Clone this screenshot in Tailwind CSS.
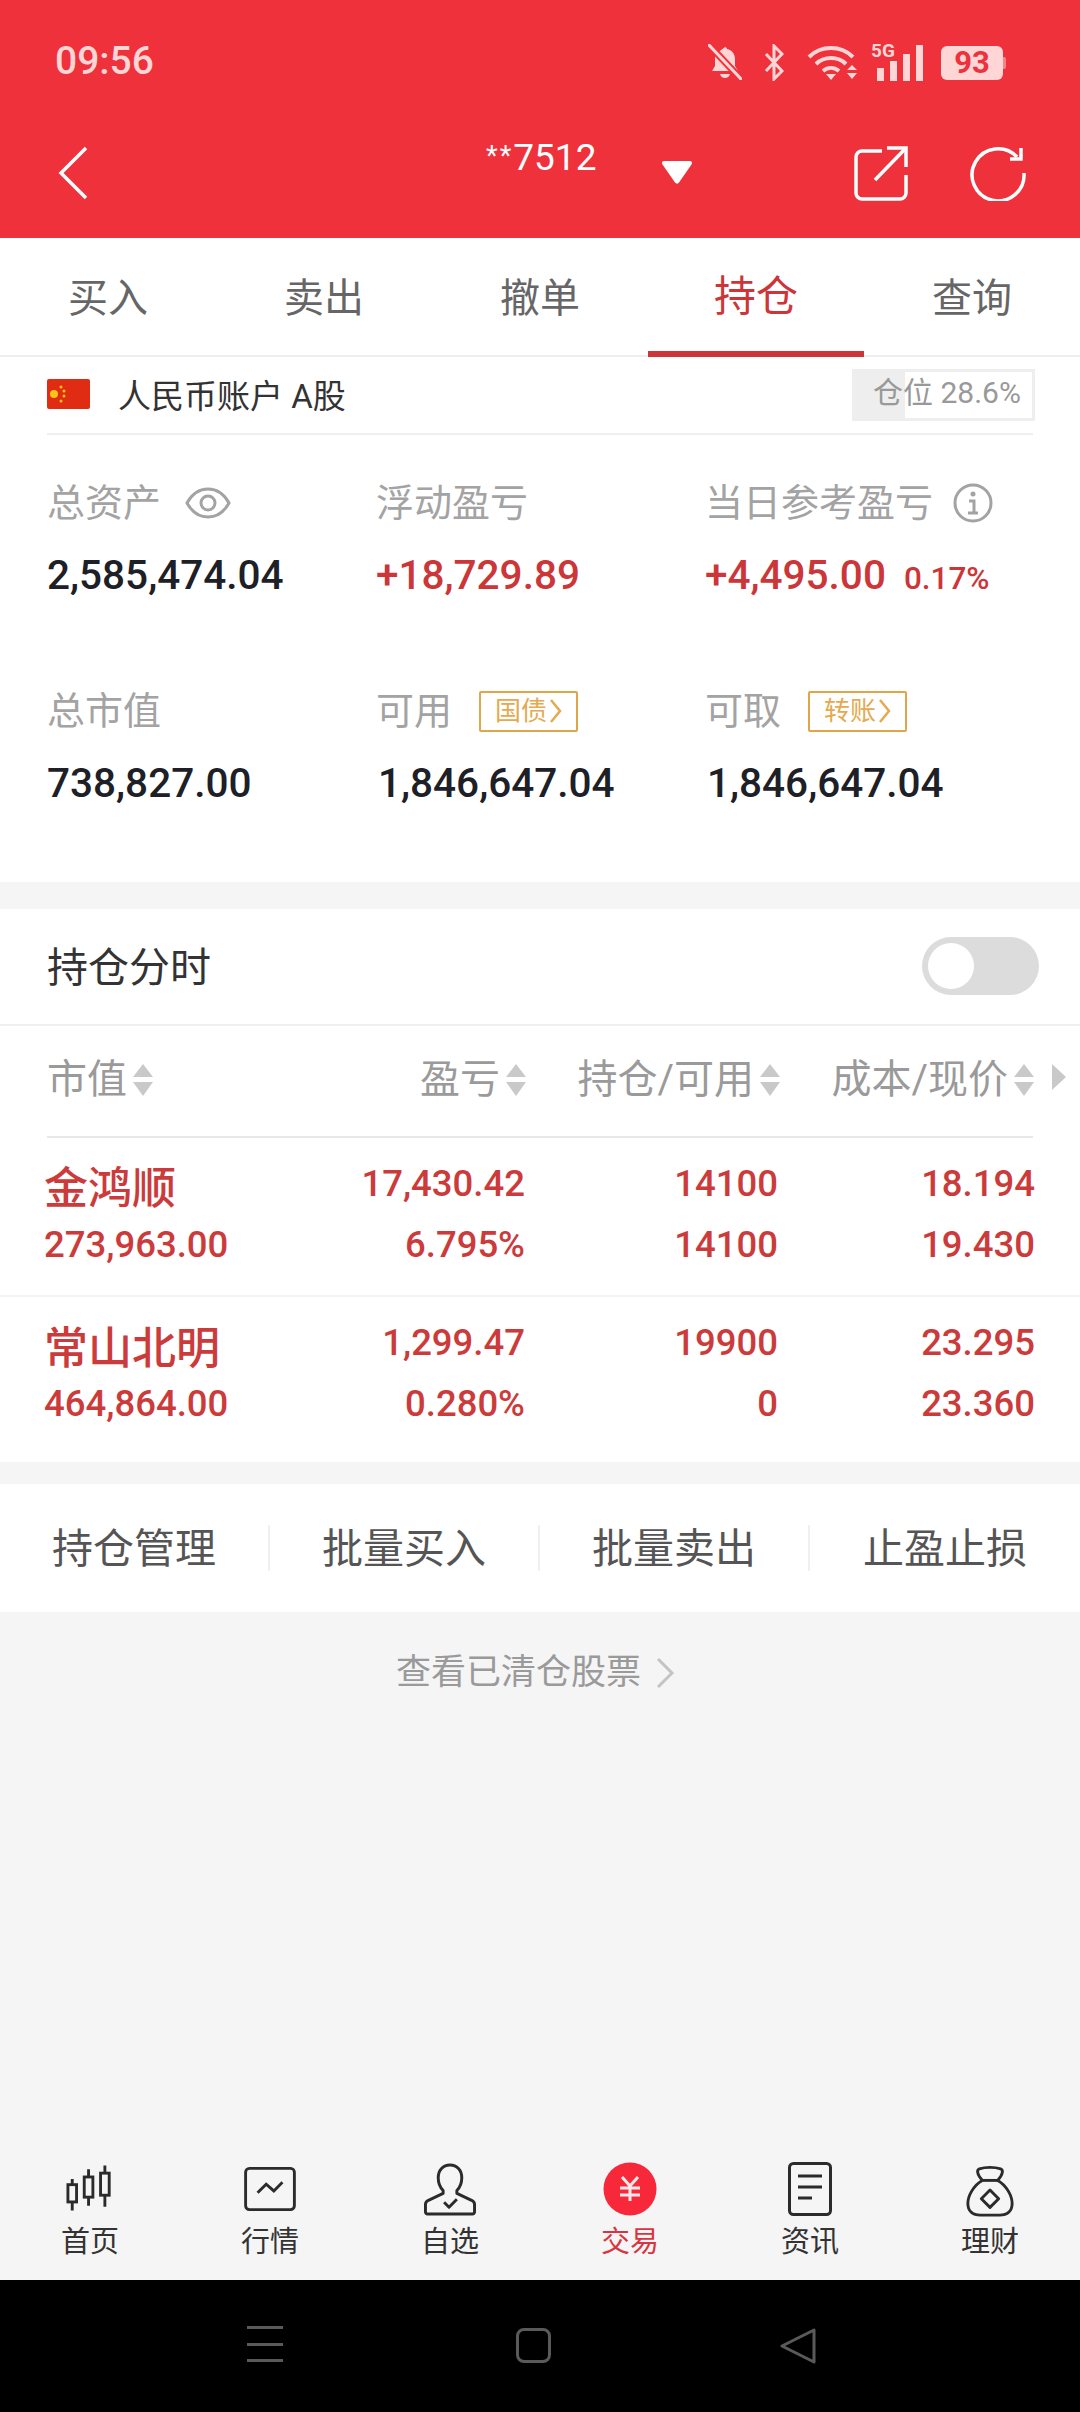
<!DOCTYPE html>
<html lang="zh-CN">
<head>
    <meta charset="UTF-8">
    <meta name="viewport" content="width=device-width, initial-scale=1.0">
    <title>持仓</title>
    <script src="https://cdn.jsdelivr.net/npm/@tailwindcss/browser@4"></script>
</head>
<body class="bg-[#f5f5f5] [font-family:Roboto,'Noto_Sans_CJK_SC',sans-serif]">
<div class="w-[1080px] h-[2412px] flex flex-col overflow-hidden">

    <!-- header -->
    <header class="h-[238px] bg-[#ef313b] shrink-0">
        <div class="h-[124px] pl-[55px] flex items-center relative">
            <span class="text-[39px] font-medium leading-none text-[#ffd6d6] -mt-[2px]">09:56</span>
            <div class="ml-auto mr-[74px] flex items-start text-[#ffd6d6]">
                <!-- bell off -->
                <svg class="w-[34px] h-[36px] mr-[22px]" viewBox="0 0 34 36" fill="currentColor">
                    <path d="M17 3c1 0 2 1 2 2 5 1 8 5 8 10v7l3 5H4l3-5v-7c0-2 .5-3.500 1-5z"/>
                    <path d="M12 30h10c-1 3-3 4-5 4s-4-1-5-4z"/>
                    <path d="M1 1l32 34" stroke="#ef313b" stroke-width="7"/>
                    <path d="M1 1l32 34" stroke="currentColor" stroke-width="3" stroke-linecap="round"/>
                </svg>
                <!-- bluetooth -->
                <svg class="w-[20px] h-[37px] mr-[23px]" viewBox="0 0 20 37" fill="none" stroke="currentColor" stroke-width="3">
                    <path d="M2 10l16 17-8 8V2l8 8L2 27"/>
                </svg>
                <!-- wifi -->
                <svg class="w-[50px] h-[37px] mr-[14px]" viewBox="0 0 50 37" fill="none" stroke="currentColor" stroke-width="4">
                    <path d="M2 13c12-12 32-12 44 0"/>
                    <path d="M9 20c8-8 22-8 30 0"/>
                    <path d="M16 27c5-4 11-4 16 0"/>
                    <path d="M19 30h10l-5 6z" fill="currentColor" stroke="none"/>
                    <path d="M45 21l5 5H40zM40 29h10l-5 6z" fill="currentColor" stroke="none"/>
                </svg>
                <!-- 5G signal -->
                <div class="relative w-[52px] h-[37px] mr-[18px]">
                    <span class="absolute left-0 -top-[2px] text-[19px] font-bold leading-[17px]">5G</span>
                    <div class="absolute left-[6px] bottom-0 flex items-end gap-[6px]">
                        <i class="block w-[7px] h-[13px] bg-[#ffd6d6]"></i>
                        <i class="block w-[7px] h-[20px] bg-[#ffd6d6]"></i>
                        <i class="block w-[7px] h-[27px] bg-[#ffd6d6]"></i>
                        <i class="block w-[7px] h-[36px] bg-[#ffd6d6]"></i>
                    </div>
                </div>
                <!-- battery -->
                <div class="mt-[2px] flex items-center">
                    <span class="w-[62px] h-[34px] rounded-[6px] bg-[#ffd6d6] text-[#ef313b] text-[31px] font-bold leading-[34px] text-center">93</span>
                    <i class="block w-[3px] h-[12px] bg-[#ffd6d6]/50 rounded-r-[2px]"></i>
                </div>
            </div>
        </div>
        <div class="h-[114px] flex items-start relative">
            <svg class="w-[32px] h-[54px] ml-[57px] mt-[22px]" viewBox="0 0 32 54" fill="none" stroke="#fff" stroke-width="3.500">
                <path d="M29 2L4 27l25 25" stroke-linejoin="miter"/>
            </svg>
            <div class="absolute left-[486px] top-[15px] text-[#fff] text-[37px] leading-[38px] flex items-center">
                <span class="text-[27px] tracking-[2px] relative -top-[2px]">**</span>7512
            </div>
            <svg class="absolute left-[662px] top-[37px] w-[30px] h-[23px]" viewBox="0 0 30 23" fill="#fff">
                <path d="M2 0h26c2 0 2.500 2 1.500 3.500L17 21.500c-1 1.500-3 1.500-4 0L.5 3.500C-.5 2 0 0 2 0z"/>
            </svg>
            <svg class="w-[56px] h-[56px] ml-[764px] mt-[21px]" viewBox="0 0 56 56" fill="none" stroke="#fff" stroke-width="3.500">
                <path d="M29 6H9a6 6 0 0 0-6 6v36a6 6 0 0 0 6 6h38a6 6 0 0 0 6-6V30"/>
                <path d="M22 35L52 4"/>
                <path d="M34 3h19v19"/>
            </svg>
            <svg class="w-[56px] h-[56px] ml-[61px] mt-[21px]" viewBox="0 0 56 56" fill="none" stroke="#fff" stroke-width="3.500">
                <path d="M47 12A26 26 0 1 0 54 28"/>
                <path d="M51 3v11H40" stroke-linejoin="miter"/>
            </svg>
        </div>
    </header>

    <!-- white top part -->
    <section class="bg-white h-[644px] shrink-0">
        <nav class="h-[119px] grid grid-cols-5 border-b-2 border-[#eeeeee] text-[40px] text-[#666]">
            <div class="flex items-center justify-center h-[117px] pt-[5px]">买入</div>
            <div class="flex items-center justify-center h-[117px] pt-[5px]">卖出</div>
            <div class="flex items-center justify-center h-[117px] pt-[5px]">撤单</div>
            <div class="flex items-center justify-center h-[119px] pt-[4px] border-b-[6px] border-[#cc3638] text-[#cc3638] text-[42px]">持仓</div>
            <div class="flex items-center justify-center h-[117px] pt-[5px]">查询</div>
        </nav>
        <div class="mx-[47px] h-[78px] border-b-2 border-[#efefef] flex items-center">
            <svg class="w-[43px] h-[30px] rounded-[2px] -mt-[2px]" viewBox="0 0 43 30">
                <rect width="43" height="30" fill="#e02c12"/>
                <circle cx="7" cy="15" r="4" fill="#f5c518"/>
                <circle cx="14" cy="8" r="1.500" fill="#f5c518"/>
                <circle cx="17" cy="12" r="1.500" fill="#f5c518"/>
                <circle cx="17" cy="17" r="1.500" fill="#f5c518"/>
                <circle cx="14" cy="22" r="1.500" fill="#f5c518"/>
            </svg>
            <span class="ml-[28px] text-[33px] leading-none text-[#333] mt-[2px]">人民币账户 A股</span>
            <div class="ml-auto -mr-[2px] -mt-[1px] relative w-[183px] h-[52px] border-[3px] border-[#eeeeee] bg-white">
                <div class="absolute left-0 top-0 h-full w-[50px] bg-[#eeeeee]"></div>
                <span class="absolute left-[18px] top-0 whitespace-nowrap text-[30px] leading-[42px] text-[#999]">仓位 28.6%</span>
            </div>
        </div>
        <div class="pt-[43px] pl-[47px] grid grid-cols-[329px_329px_1fr] grid-rows-[50px_50px] gap-y-[22px]">
            <div class="flex items-center text-[38px] text-[#a3a3a3] leading-[50px]">
                总资产
                <svg class="w-[46px] h-[32px] ml-[24px]" viewBox="0 0 46 32" fill="none" stroke="#a3a3a3" stroke-width="3">
                    <path d="M2 16C7 7 14 2 23 2s16 5 21 14c-5 9-12 14-21 14S7 25 2 16z"/>
                    <circle cx="23" cy="16" r="7"/>
                </svg>
            </div>
            <div class="text-[38px] text-[#a3a3a3] leading-[50px]">浮动盈亏</div>
            <div class="flex items-center text-[38px] text-[#a3a3a3] leading-[50px]">
                当日参考盈亏
                <svg class="w-[40px] h-[40px] ml-[20px]" viewBox="0 0 40 40" fill="none" stroke="#a3a3a3" stroke-width="3">
                    <circle cx="20" cy="20" r="18"/>
                    <path d="M16 18h5v12M15 30h10" stroke-width="3"/>
                    <circle cx="20" cy="11" r="2.500" fill="#a3a3a3" stroke="none"/>
                </svg>
            </div>
            <div class="text-[40.5px] font-medium leading-[50px] text-[#1d2026]">2,585,474.04</div>
            <div class="text-[40.5px] font-medium leading-[50px] text-[#cc3638]">+18,729.89</div>
            <div class="flex items-baseline text-[40.5px] font-medium leading-[50px] text-[#cc3638]">+4,495.00<span class="ml-[18px] text-[31.5px]">0.17%</span></div>
        </div>
        <div class="mt-[86px] pl-[47px] grid grid-cols-[329px_329px_1fr] grid-rows-[50px_50px] gap-y-[22px]">
            <div class="text-[38px] text-[#a3a3a3] leading-[50px]">总市值</div>
            <div class="flex items-center text-[38px] text-[#a3a3a3] leading-[50px]">
                可用
                <span class="ml-[27px] w-[99px] h-[41px] border-2 border-[#e0a64a] rounded-[2px] flex items-center justify-center text-[26px] leading-none text-[#e5a94f]">国债<svg class="w-[13px] h-[26px] ml-[2px]" viewBox="0 0 13 26" fill="none" stroke="#e5a94f" stroke-width="2.500"><path d="M2 2l9 11-9 11"/></svg></span>
            </div>
            <div class="flex items-center text-[38px] text-[#a3a3a3] leading-[50px]">
                可取
                <span class="ml-[27px] w-[99px] h-[41px] border-2 border-[#e0a64a] rounded-[2px] flex items-center justify-center text-[26px] leading-none text-[#e5a94f]">转账<svg class="w-[13px] h-[26px] ml-[2px]" viewBox="0 0 13 26" fill="none" stroke="#e5a94f" stroke-width="2.500"><path d="M2 2l9 11-9 11"/></svg></span>
            </div>
            <div class="text-[40.5px] font-medium leading-[50px] text-[#1d2026]">738,827.00</div>
            <div class="text-[40.5px] font-medium leading-[50px] text-[#1d2026] pl-[2px]">1,846,647.04</div>
            <div class="text-[40.5px] font-medium leading-[50px] text-[#1d2026] pl-[2px]">1,846,647.04</div>
        </div>
    </section>

    <!-- positions -->
    <section class="bg-white mt-[27px] h-[553px] shrink-0">
        <div class="h-[117px] border-b-2 border-[#efefef] flex items-center pl-[47px] pr-[41px] text-[41px] text-[#333]">
            <span class="pt-[4px]">持仓分时</span>
            <div class="ml-auto -mt-[2px] w-[117px] h-[58px] rounded-full bg-[#dcdcdc] p-[6px]">
                <div class="w-[46px] h-[46px] rounded-full bg-white"></div>
            </div>
        </div>
        <div class="h-[110px] relative grid grid-cols-[240px_239px_254px_254px] pl-[47px] items-center text-[40px] text-[#9a9a9a]">
            <div class="flex items-center -mt-[2px]">市值
                <svg class="w-[20px] h-[32px] ml-[6px]" viewBox="0 0 20 32" fill="#c9c9c9"><path d="M10 0l10 13H0zM0 18h20L10 32z"/></svg>
            </div>
            <div class="flex items-center justify-end -mt-[2px]">盈亏
                <svg class="w-[20px] h-[32px] ml-[6px]" viewBox="0 0 20 32" fill="#c9c9c9"><path d="M10 0l10 13H0zM0 18h20L10 32z"/></svg>
            </div>
            <div class="flex items-center justify-end -mt-[2px]">持仓/可用
                <svg class="w-[20px] h-[32px] ml-[6px]" viewBox="0 0 20 32" fill="#c9c9c9"><path d="M10 0l10 13H0zM0 18h20L10 32z"/></svg>
            </div>
            <div class="flex items-center justify-end -mt-[2px]">成本/现价
                <svg class="w-[20px] h-[32px] ml-[6px]" viewBox="0 0 20 32" fill="#c9c9c9"><path d="M10 0l10 13H0zM0 18h20L10 32z"/></svg>
            </div>
            <svg class="absolute left-[1052px] top-[38px] w-[14px] h-[26px]" viewBox="0 0 14 26" fill="#c9c9c9"><path d="M0 0l14 13L0 26z"/></svg>
        </div>
        <div class="mx-[47px] h-[2px] bg-[#e8e8e8]"></div>

        <div class="h-[159px] pt-[15px] pl-[44px] border-b-2 border-[#f3f3f3] grid grid-cols-[240px_241px_253px_257px] text-[36.5px] font-medium text-[#cc3b3b] text-right leading-[61px]">
            <div class="text-left whitespace-nowrap"><div class="h-[61px] text-[44px] font-medium leading-[73px]">金鸿顺</div><div>273,963.00</div></div>
            <div><div>17,430.42</div><div>6.795%</div></div>
            <div><div>14100</div><div>14100</div></div>
            <div><div>18.194</div><div>19.430</div></div>
        </div>
        <div class="h-[163px] pt-[15px] pl-[44px] grid grid-cols-[240px_241px_253px_257px] text-[36.5px] font-medium text-[#cc3b3b] text-right leading-[61px]">
            <div class="text-left whitespace-nowrap"><div class="h-[61px] text-[44px] font-medium leading-[74px]">常山北明</div><div>464,864.00</div></div>
            <div><div>1,299.47</div><div>0.280%</div></div>
            <div><div>19900</div><div>0</div></div>
            <div><div>23.295</div><div>23.360</div></div>
        </div>
    </section>

    <!-- actions -->
    <div class="bg-white mt-[22px] h-[128px] shrink-0 grid grid-cols-4 items-center text-[41px] text-[#555]">
        <div class="h-[46px] pt-[3px] flex items-center justify-center border-r-2 border-[#f0f0f0]">持仓管理</div>
        <div class="h-[46px] pt-[3px] flex items-center justify-center border-r-2 border-[#f0f0f0]">批量买入</div>
        <div class="h-[46px] pt-[3px] flex items-center justify-center border-r-2 border-[#f0f0f0]">批量卖出</div>
        <div class="h-[46px] pt-[3px] flex items-center justify-center">止盈止损</div>
    </div>

    <div class="h-[120px] pt-[2px] pr-[9px] flex items-center justify-center text-[35px] text-[#9a9a9a] shrink-0">
        查看已清仓股票
        <svg class="w-[20px] h-[32px] ml-[14px]" viewBox="0 0 20 32" fill="none" stroke="#c4c4c4" stroke-width="3"><path d="M3 2l14 14L3 30"/></svg>
    </div>

    <div class="flex-1"></div>

    <!-- bottom nav -->
    <nav class="h-[128px] grid grid-cols-6 shrink-0 text-[29px] leading-[40px] text-[#333] text-center">
        <div>
            <div class="h-[70px] flex justify-center">
                <svg class="w-[48px] h-[47px] mt-[13px]" viewBox="0 0 50 48" fill="none" stroke="#2b2b2b" stroke-width="3">
                    <rect x="2" y="20" width="9" height="18"/><path d="M6.500 14v6M6.500 38v9"/>
                    <rect x="19" y="12" width="9" height="21"/><path d="M23.500 4v8M23.500 33v9"/>
                    <rect x="36" y="8" width="9" height="23"/><path d="M40.500 0v8M40.500 31v12"/>
                </svg>
            </div>
            <div>首页</div>
        </div>
        <div>
            <div class="h-[70px] flex justify-center">
                <svg class="w-[54px] h-[44px] mt-[15px]" viewBox="0 0 54 46" fill="none" stroke="#2b2b2b" stroke-width="3">
                    <rect x="1.500" y="1.500" width="51" height="43" rx="4"/>
                    <path d="M14 27l9-9 8 7 9-9" stroke-width="3"/>
                </svg>
            </div>
            <div>行情</div>
        </div>
        <div>
            <div class="h-[70px] flex justify-center">
                <svg class="w-[54px] h-[53px] mt-[11px]" viewBox="0 0 54 54" fill="none" stroke="#2b2b2b" stroke-width="3" stroke-linejoin="round">
                    <path d="M20 28c-3-3-5-8-5-13C15 7 20 2 27 2s12 5 12 13c0 5-2 10-5 13v3l15 7c2 1 3 2 3 4v8c0 1-1 2-2 2H4c-1 0-2-1-2-2v-8c0-2 1-3 3-4l15-7z"/>
                    <path d="M21 40l5 5 8-8"/>
                </svg>
            </div>
            <div>自选</div>
        </div>
        <div class="text-[#d9343f]">
            <div class="h-[70px] flex justify-center">
                <svg class="w-[54px] h-[54px] mt-[10px]" viewBox="0 0 54 54">
                    <circle cx="27" cy="27" r="26.500" fill="#f8283b"/>
                    <path d="M19 15l8 9 8-9M17 26h20M17 33h20M27 24v15" fill="none" stroke="#fde8ea" stroke-width="3"/>
                </svg>
            </div>
            <div>交易</div>
        </div>
        <div>
            <div class="h-[70px] flex justify-center">
                <svg class="w-[44px] h-[54px] mt-[10px]" viewBox="0 0 44 54" fill="none" stroke="#2b2b2b" stroke-width="3">
                    <rect x="1.500" y="1.500" width="41" height="51" rx="4"/>
                    <path d="M10 14h24M10 25h24M10 36h14"/>
                </svg>
            </div>
            <div>资讯</div>
        </div>
        <div>
            <div class="h-[70px] flex justify-center">
                <svg class="w-[50px] h-[52px] mt-[13px]" viewBox="0 0 50 54" fill="none" stroke="#2b2b2b" stroke-width="3" stroke-linejoin="round">
                    <path d="M14 4c6-2 16-2 22 0 3 1 2 5 0 8l-3 4c9 5 15 16 15 24 0 8-5 12-13 12H15C7 52 2 48 2 40c0-8 6-19 15-24l-3-4c-2-3-3-7 0-8z"/>
                    <path d="M17 16h16"/>
                    <path d="M25 26l9 9-9 9-9-9z"/>
                </svg>
            </div>
            <div>理财</div>
        </div>
    </nav>

    <!-- android nav -->
    <div class="h-[132px] bg-black grid grid-cols-3 px-[132px] shrink-0">
        <div class="flex justify-center pt-[46px]">
            <div class="w-[36px] h-[36px] flex flex-col justify-between -ml-[6px]">
                <i class="block h-[3px] bg-[#5a5a5a]"></i>
                <i class="block h-[3px] bg-[#5a5a5a]"></i>
                <i class="block h-[3px] bg-[#5a5a5a]"></i>
            </div>
        </div>
        <div class="flex justify-center pt-[48px]">
            <div class="w-[35px] h-[35px] -ml-[13px] rounded-[8px] border-[3px] border-[#5a5a5a]"></div>
        </div>
        <div class="flex justify-center pt-[48px]">
            <svg class="w-[36px] h-[36px] -ml-[28px]" viewBox="0 0 36 36" fill="none" stroke="#5a5a5a" stroke-width="3" stroke-linejoin="round"><path d="M34 2v32L2 18z"/></svg>
        </div>
    </div>
</div>
</body>
</html>
